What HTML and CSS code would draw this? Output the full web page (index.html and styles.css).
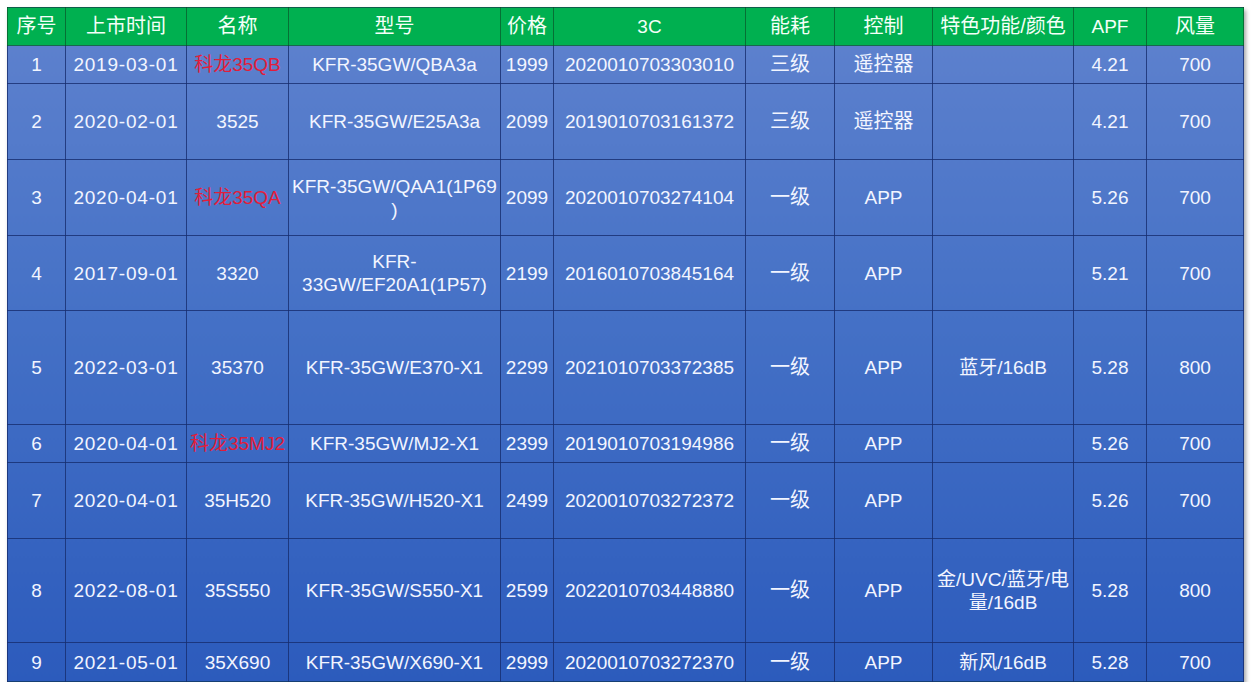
FILE: index.html
```html
<!DOCTYPE html>
<html lang="zh">
<head>
<meta charset="utf-8">
<title>科龙空调型号表</title>
<link rel="stylesheet" href="styles.css">
</head>
<body>
<table class="grid">
  <colgroup>
    <col class="c1"><col class="c2"><col class="c3"><col class="c4"><col class="c5"><col class="c6"><col class="c7"><col class="c8"><col class="c9"><col class="c10"><col class="c11">
  </colgroup>
  <thead>
    <tr class="head">
      <th class="cjk">序号</th><th class="cjk">上市时间</th><th class="cjk">名称</th><th class="cjk">型号</th><th class="cjk">价格</th><th>3C</th><th class="cjk">能耗</th><th class="cjk">控制</th><th class="cjk">特色功能/颜色</th><th>APF</th><th class="cjk">风量</th>
    </tr>
  </thead>
  <tbody>
    <tr class="h38"><td>1</td><td class="date">2019-03-01</td><td class="red">科龙35QB</td><td>KFR-35GW/QBA3a</td><td>1999</td><td>2020010703303010</td><td class="cjk">三级</td><td class="cjk">遥控器</td><td></td><td>4.21</td><td>700</td></tr>
    <tr class="h76"><td>2</td><td class="date">2020-02-01</td><td>3525</td><td>KFR-35GW/E25A3a</td><td>2099</td><td>2019010703161372</td><td class="cjk">三级</td><td class="cjk">遥控器</td><td></td><td>4.21</td><td>700</td></tr>
    <tr class="h76"><td>3</td><td class="date">2020-04-01</td><td class="red">科龙35QA</td><td>KFR-35GW/QAA1(1P69<br>)</td><td>2099</td><td>2020010703274104</td><td class="cjk">一级</td><td>APP</td><td></td><td>5.26</td><td>700</td></tr>
    <tr class="h75"><td>4</td><td class="date">2017-09-01</td><td>3320</td><td>KFR-<br>33GW/EF20A1(1P57)</td><td>2199</td><td>2016010703845164</td><td class="cjk">一级</td><td>APP</td><td></td><td>5.21</td><td>700</td></tr>
    <tr class="h114"><td>5</td><td class="date">2022-03-01</td><td>35370</td><td>KFR-35GW/E370-X1</td><td>2299</td><td>2021010703372385</td><td class="cjk">一级</td><td>APP</td><td>蓝牙/16dB</td><td>5.28</td><td>800</td></tr>
    <tr class="h38"><td>6</td><td class="date">2020-04-01</td><td class="red">科龙35MJ2</td><td>KFR-35GW/MJ2-X1</td><td>2399</td><td>2019010703194986</td><td class="cjk">一级</td><td>APP</td><td></td><td>5.26</td><td>700</td></tr>
    <tr class="h76"><td>7</td><td class="date">2020-04-01</td><td>35H520</td><td>KFR-35GW/H520-X1</td><td>2499</td><td>2020010703272372</td><td class="cjk">一级</td><td>APP</td><td></td><td>5.26</td><td>700</td></tr>
    <tr class="h104"><td>8</td><td class="date">2022-08-01</td><td>35S550</td><td>KFR-35GW/S550-X1</td><td>2599</td><td>2022010703448880</td><td class="cjk">一级</td><td>APP</td><td>金/UVC/蓝牙/电<br>量/16dB</td><td>5.28</td><td>800</td></tr>
    <tr class="h39"><td>9</td><td class="date">2021-05-01</td><td>35X690</td><td>KFR-35GW/X690-X1</td><td>2999</td><td>2020010703272370</td><td class="cjk">一级</td><td>APP</td><td>新风/16dB</td><td>5.28</td><td>700</td></tr>
  </tbody>
</table>
</body>
</html>
```

FILE: styles.css
```css
html, body {
  margin: 0;
  padding: 0;
  background: #ffffff;
}
body {
  padding: 7px 0 0 7px;
  font-family: "Liberation Sans", "Noto Sans CJK SC", sans-serif;
}
.grid {
  border-collapse: collapse;
  table-layout: fixed;
  width: 1236px;
  box-shadow: 2px 3px 4px rgba(0, 0, 0, 0.35);
  background: linear-gradient(to bottom, #00b050 0, #00b050 38px, #5c80cd 38px, #4571c6 45%, #2c5bbc 100%);
  color: #f2f5ff;
  font-size: 19px;
}
.c1 { width: 58px; }
.c2 { width: 121px; }
.c3 { width: 102px; }
.c4 { width: 212px; }
.c5 { width: 53px; }
.c6 { width: 192px; }
.c7 { width: 89px; }
.c8 { width: 98px; }
.c9 { width: 141px; }
.c10 { width: 73px; }
.c11 { width: 97px; }
.grid th, .grid td {
  border: 1px solid rgba(22, 45, 110, 0.8);
  padding: 0;
  text-align: center;
  vertical-align: middle;
  font-weight: normal;
  line-height: 23px;
  white-space: nowrap;
}
.grid th {
  border-color: rgba(10, 70, 35, 0.6);
  color: #f4fff8;
}
.cjk { font-size: 20px; }
.date { letter-spacing: 0.8px; }
.head { height: 38px; }
.h38 { height: 38px; }
.h39 { height: 39px; }
.h75 { height: 75px; }
.h76 { height: 76px; }
.h104 { height: 104px; }
.h114 { height: 114px; }
.red { color: #e21d3a; }
```
